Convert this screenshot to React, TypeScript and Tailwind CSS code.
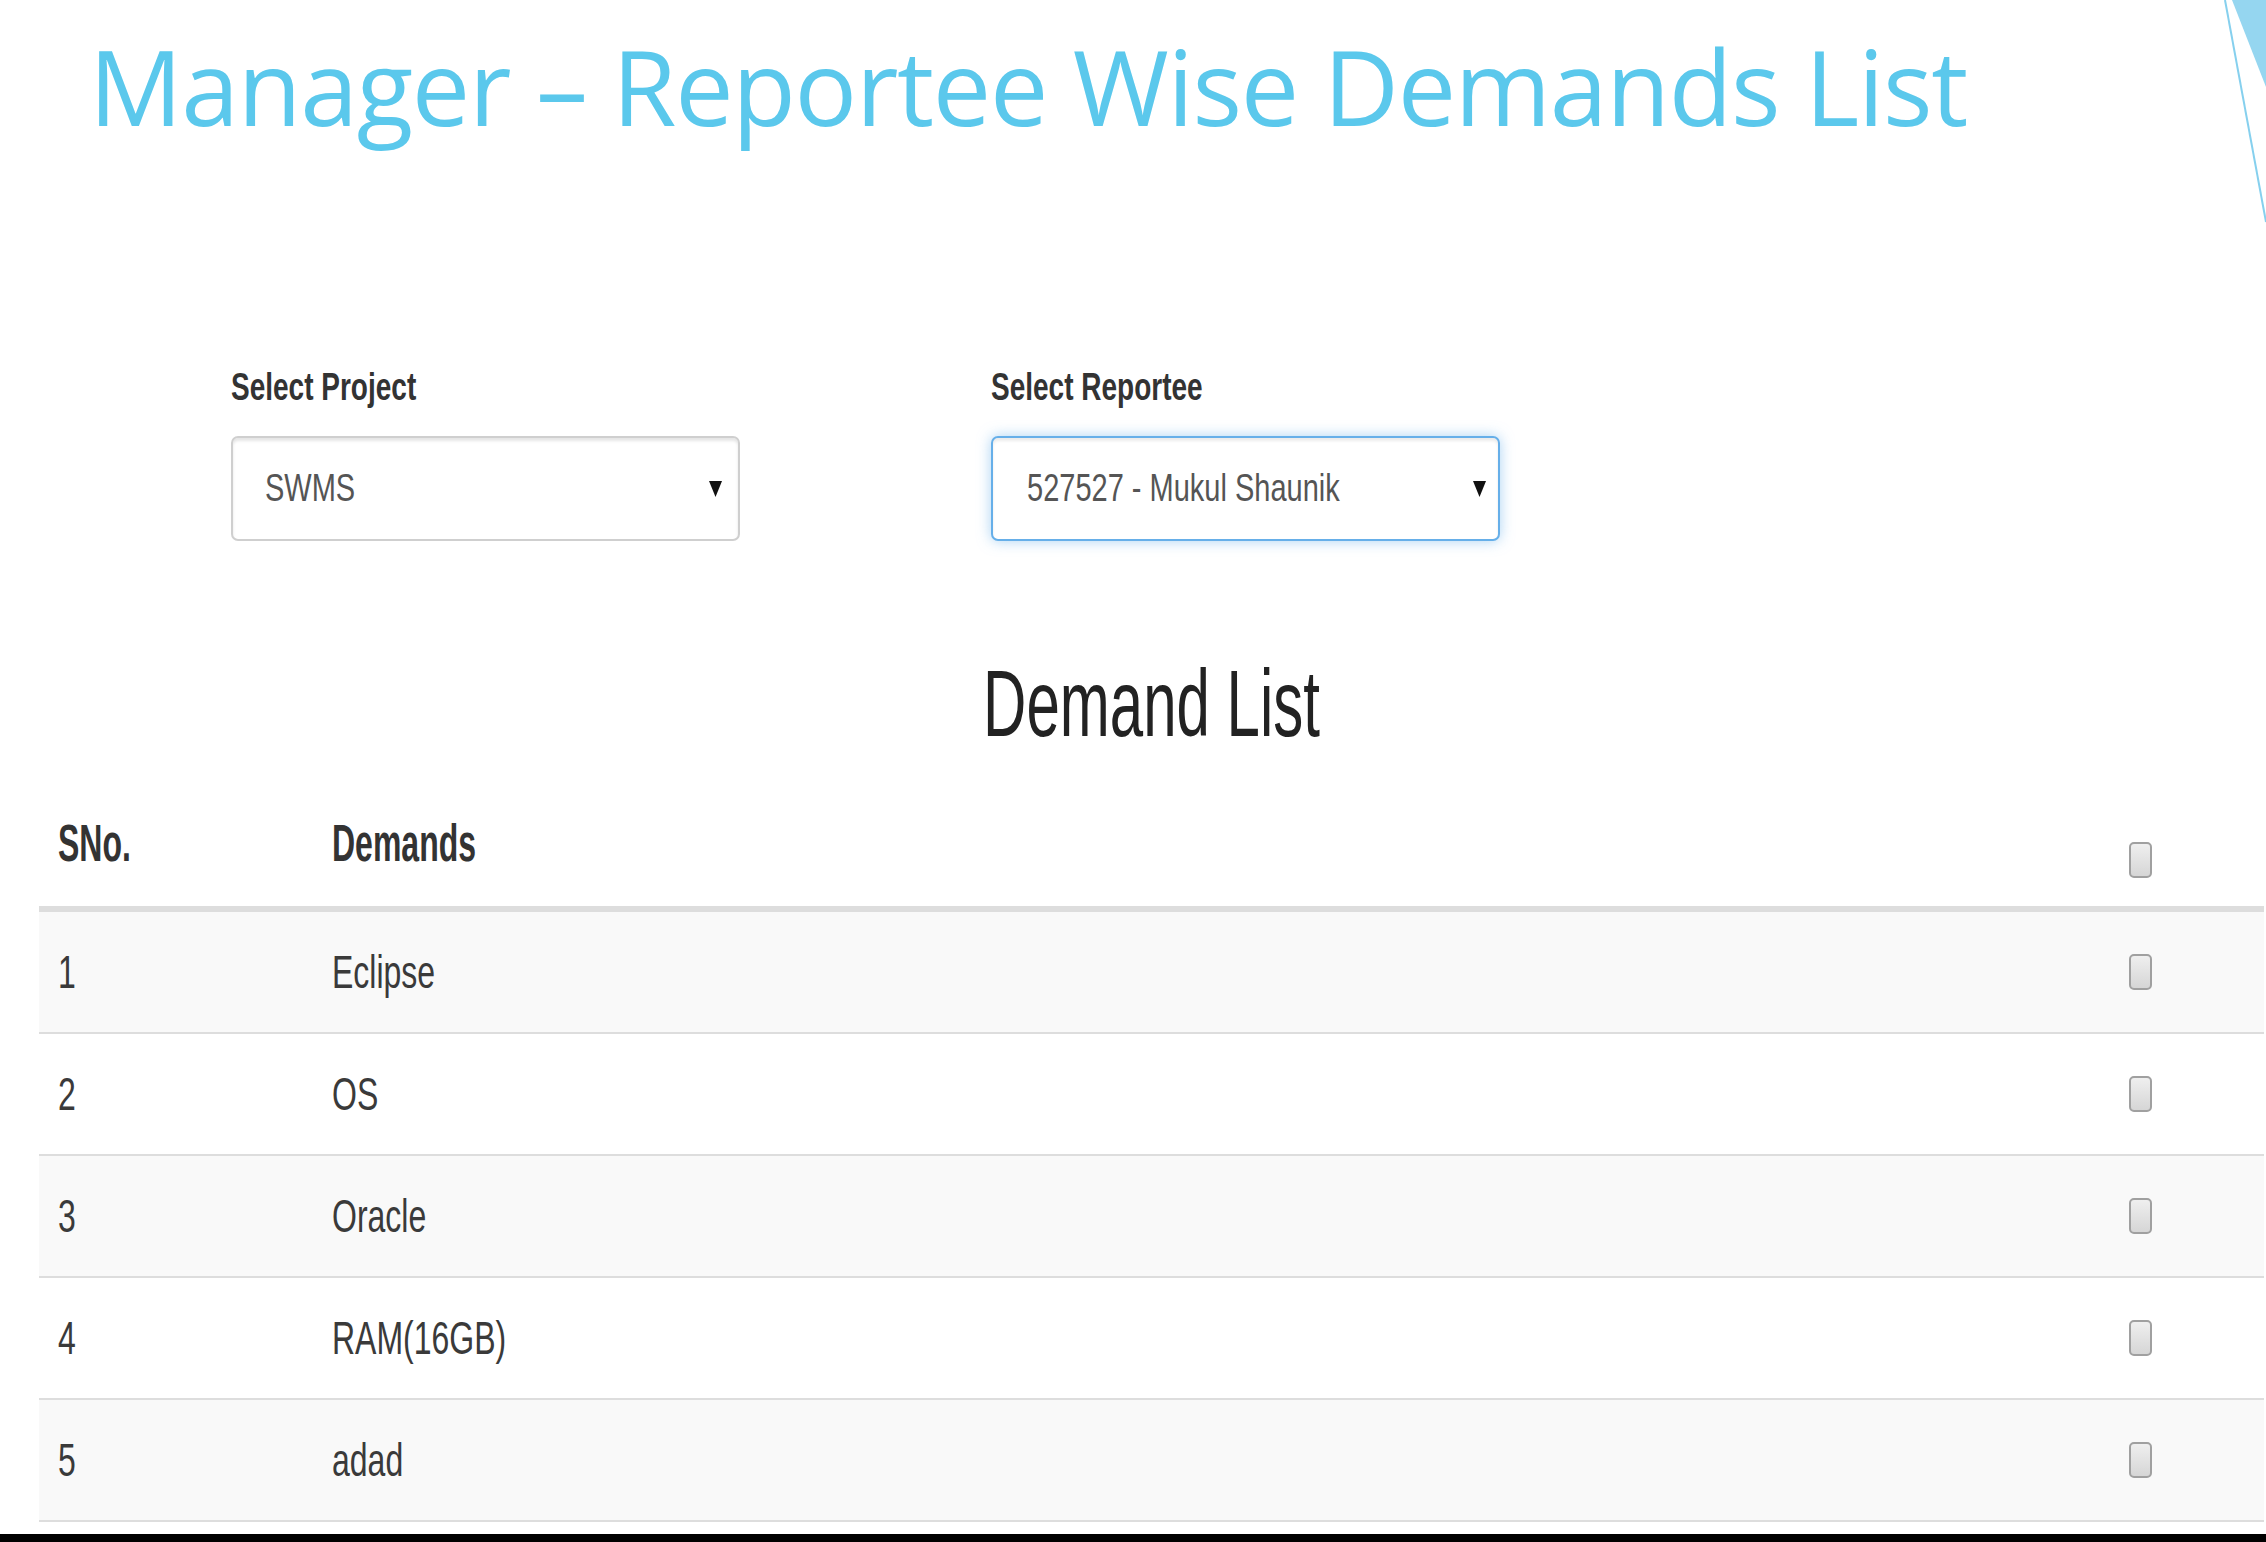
import React from 'react';

const demands = ['Eclipse', 'OS', 'Oracle', 'RAM(16GB)', 'adad'];

const Checkbox = () => (
  <span className="block w-[23px] h-[36px] rounded-[5px] border-2 border-[#a0a0a0] bg-linear-to-b from-[#efefef] to-[#d6d6d6]" />
);

const Caret = () => (
  <svg width="13" height="16" viewBox="0 0 13 16" className="shrink-0">
    <polygon points="0,0 13,0 6.5,16" fill="#111" />
  </svg>
);

const SelectField = ({ label, value, focused }: { label: string; value: string; focused?: boolean }) => (
  <div className="flex flex-col w-[509px]">
    <div className="h-[40px] leading-[40px]">
      <span className="inline-block text-[28px] font-bold text-[#333] scale-y-[1.38]">{label}</span>
    </div>
    <div
      className={
        focused
          ? 'mt-[28px] h-[105px] flex items-center justify-between pl-[34px] pr-[12px] rounded-[7px] border-2 border-[#66afe9] bg-white shadow-[inset_0_3px_3px_rgba(0,0,0,0.08),0_0_14px_rgba(102,175,233,0.55)]'
          : 'mt-[28px] h-[105px] flex items-center justify-between pl-[32px] pr-[16px] rounded-[7px] border-2 border-[#cfcfcf] bg-white shadow-[inset_0_3px_3px_rgba(0,0,0,0.1)]'
      }
    >
      <span className="inline-block text-[29px] text-[#555] scale-y-[1.32]">{value}</span>
      <Caret />
    </div>
  </div>
);

export default function App() {
  return (
    <div className="relative w-[2266px] h-[1542px] bg-white overflow-hidden flex flex-col">
      {/* slide corner decoration */}
      <svg className="absolute top-0 right-0" width="42" height="230" viewBox="0 0 42 230">
        <polygon points="8,0 42,0 42,87" fill="#95d6f0" />
        <line x1="1" y1="0" x2="42" y2="222" stroke="#86d0ee" strokeWidth="2" />
      </svg>

      {/* Title */}
      <h1 className="mt-[34px] ml-[89px] h-[104px] leading-[104px] text-[104px] tracking-[-1.3px] text-[#5bc8ec] font-['Open_Sans',sans-serif] whitespace-nowrap">
        Manager – Reportee Wise Demands List
      </h1>

      <div className="font-['Liberation_Sans',Arial,sans-serif] flex flex-col">
        {/* Selects */}
        <div className="mt-[230px] ml-[231px] flex gap-[251px]">
          <SelectField label="Select Project" value="SWMS" />
          <SelectField label="Select Reportee" value="527527 - Mukul Shaunik" focused />
        </div>

        {/* Demand list */}
        <div className="ml-[39px] w-[2225px] flex flex-col">
          <div className="mt-[128px] h-[70px] leading-[70px] text-center">
            <span className="inline-block text-[60px] text-[#222] scale-y-[1.58]">Demand List</span>
          </div>

          <div className="mt-[74px] h-[99px] grid grid-cols-[274px_1fr_auto] items-center border-b-[6px] border-[#dddddd]">
            <span className="pl-[19px] pb-[34px]">
              <span className="inline-block text-[32px] font-bold text-[#333] scale-y-[1.62]">SNo.</span>
            </span>
            <span className="pl-[19px] pb-[34px]">
              <span className="inline-block text-[32px] font-bold text-[#333] scale-y-[1.62]">Demands</span>
            </span>
            <span className="pr-[112px]">
              <Checkbox />
            </span>
          </div>

          {demands.map((d, i) => (
            <div
              key={d}
              className={
                i % 2 === 0
                  ? 'h-[122px] grid grid-cols-[274px_1fr_auto] items-center border-b-2 border-[#dddddd] bg-[#f9f9f9]'
                  : 'h-[122px] grid grid-cols-[274px_1fr_auto] items-center border-b-2 border-[#dddddd] bg-white'
              }
            >
              <span className="pl-[19px]">
                <span className="inline-block text-[32px] text-[#3a3a3a] scale-y-[1.42]">{i + 1}</span>
              </span>
              <span className="pl-[19px]">
                <span className="inline-block text-[32px] text-[#3a3a3a] scale-y-[1.42]">{d}</span>
              </span>
              <span className="pr-[112px]">
                <Checkbox />
              </span>
            </div>
          ))}
        </div>

        <div className="mt-[12px] h-[9px] bg-black" />
      </div>
    </div>
  );
}
